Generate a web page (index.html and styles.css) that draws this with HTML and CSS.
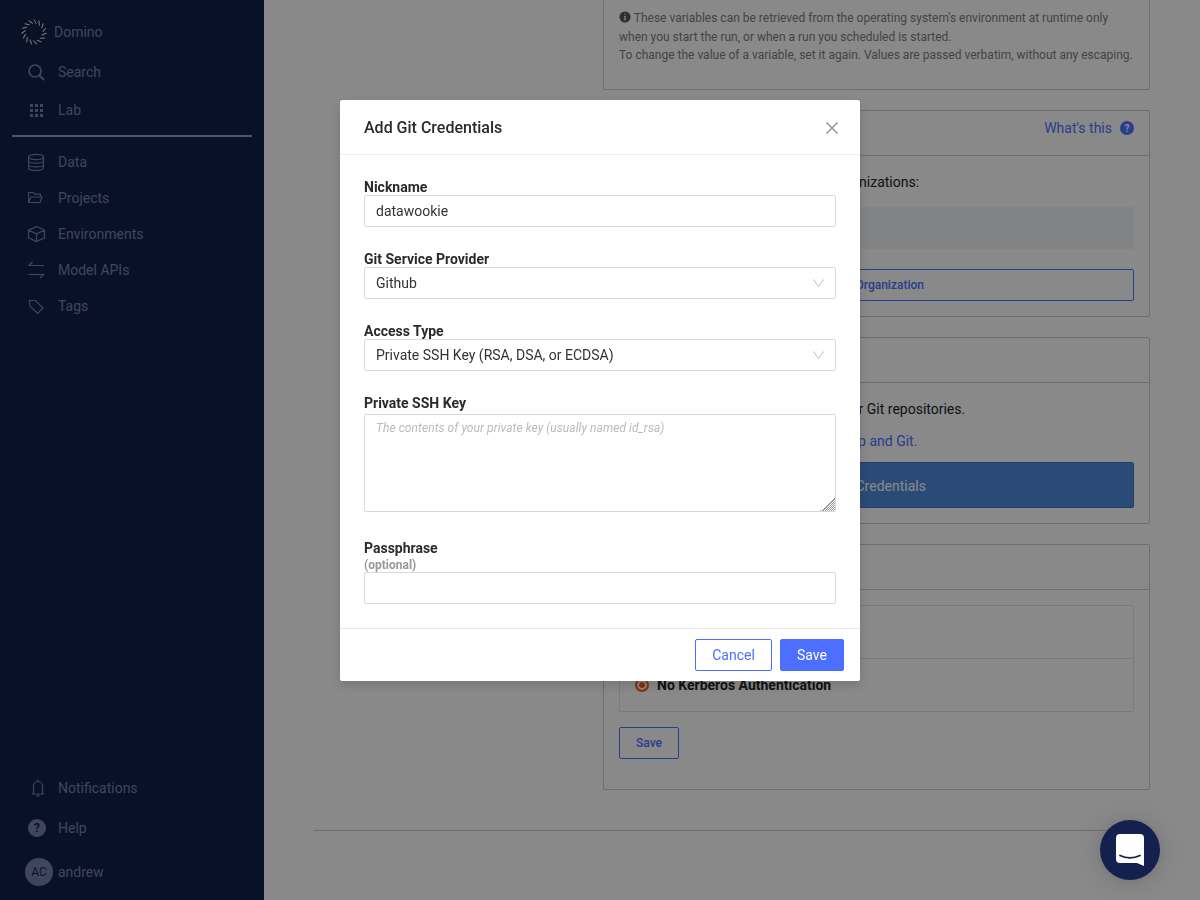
FILE: index.html
```html
<!DOCTYPE html>
<html lang="en">
<head>
    <meta charset="UTF-8">
    <title>Domino - Account Settings</title>
    <link rel="stylesheet" href="styles.css">
</head>
<body>
    <aside class="sidebar">
        <div class="logo-row">
            <svg class="logo" width="26" height="26" viewBox="0 0 26 26">
                <defs><path id="dash" d="M13 .8 L15.200 4.500" /></defs>
                <g stroke="#ece8d4" stroke-width="1" fill="none" stroke-linecap="round">
                    <use href="#dash" transform="rotate(0 13 13)"/>
                    <use href="#dash" transform="rotate(24 13 13)"/>
                    <use href="#dash" transform="rotate(48 13 13)"/>
                    <use href="#dash" transform="rotate(72 13 13)"/>
                    <use href="#dash" transform="rotate(96 13 13)"/>
                    <use href="#dash" transform="rotate(120 13 13)"/>
                    <use href="#dash" transform="rotate(144 13 13)"/>
                    <use href="#dash" transform="rotate(168 13 13)"/>
                    <use href="#dash" transform="rotate(192 13 13)"/>
                    <use href="#dash" transform="rotate(216 13 13)"/>
                    <use href="#dash" transform="rotate(240 13 13)"/>
                    <use href="#dash" transform="rotate(264 13 13)"/>
                    <use href="#dash" transform="rotate(288 13 13)"/>
                    <use href="#dash" transform="rotate(312 13 13)"/>
                    <use href="#dash" transform="rotate(336 13 13)"/>
                </g>
            </svg>
            <span>Domino</span>
        </div>
        <a class="nav-item tall">
            <svg class="nav-icon" width="18" height="18" viewBox="0 0 18 18"><circle cx="7" cy="8" r="6" stroke-width="1.700"/><path d="M11.300 12.300 L16 17" stroke-width="2"/></svg>
            Search
        </a>
        <a class="nav-item tall">
            <svg class="nav-icon" width="18" height="18" viewBox="0 0 18 18"><path class="solid" d="M2 3h3v3H2zM7 3h3v3H7zM12 3h3v3h-3zM2 8h3v3H2zM7 8h3v3H7zM12 8h3v3h-3zM2 13h3v3H2zM7 13h3v3H7zM12 13h3v3h-3z"/></svg>
            Lab
        </a>
        <div class="divider"></div>
        <a class="nav-item">
            <svg class="nav-icon" width="18" height="18" viewBox="0 0 18 18"><ellipse cx="8" cy="4" rx="7.500" ry="2.600"/><path d="M.5 4v11c0 1.400 3.400 2.500 7.500 2.500s7.500-1.100 7.500-2.500V4M.5 7.700c0 1.400 3.400 2.500 7.500 2.500s7.500-1.100 7.500-2.500M.5 11.400c0 1.400 3.400 2.500 7.500 2.500s7.500-1.100 7.500-2.500"/></svg>
            Data
        </a>
        <a class="nav-item">
            <svg class="nav-icon" width="18" height="18" viewBox="0 0 18 18"><path d="M.5 13.500V3.500h4.800l1.500 1.700h5.700v2.800M.5 13.500L3 8h11l-2 5.500z"/></svg>
            Projects
        </a>
        <a class="nav-item">
            <svg class="nav-icon" width="18" height="18" viewBox="0 0 18 18"><path d="M8.500 1.500l8 3.700v7.600l-8 3.700-8-3.700V5.200zM.5 5.200l8 3.700 8-3.700M8.500 8.900v7.600"/></svg>
            Environments
        </a>
        <a class="nav-item">
            <svg class="nav-icon" width="18" height="18" viewBox="0 0 18 18"><path d="M16 4.500H1L4.500 1M.5 13.500h15L12 17"/></svg>
            Model APIs
        </a>
        <a class="nav-item">
            <svg class="nav-icon" width="18" height="18" viewBox="0 0 18 18"><path d="M1.500 3.500h5.700l7.800 7.500-5.300 5.500L2 9.200zM4.800 6.500h.1"/></svg>
            Tags
        </a>
        <div class="sidebar-bottom">
            <a class="nav-item bottom">
                <svg class="nav-icon" width="18" height="18" viewBox="0 0 18 18"><path d="M4 15h12M5.500 15V7a4.500 4.500 0 0 1 9 0v8M10 .8v1.700M8.500 16.800h3"/></svg>
                Notifications
            </a>
            <a class="nav-item bottom">
                <svg class="nav-icon" width="18" height="18" viewBox="0 0 18 18"><circle class="solid" cx="9" cy="9" r="9"/><text class="help-mark" x="9" y="13">?</text></svg>
                Help
            </a>
            <a class="nav-item user">
                <span class="avatar">AC</span>
                andrew
            </a>
        </div>
    </aside>

    <main class="main">
        <div class="settings">
            <section class="card note">
                <svg class="info" width="12" height="12" viewBox="0 0 12 12"><circle cx="6" cy="6" r="5.500" fill="#555"/><path d="M5.200 2.500h1.500v1.300H5.200zM4.800 5h2v3.400h.6v.9H4.700v-.9h.6V5.900h-.5z" fill="#ddd"/></svg>
                These variables can be retrieved from the operating system's environment at runtime only<br>
                when you start the run, or when a run you scheduled is started.<br>
                To change the value of a variable, set it again. Values are passed verbatim, without any escaping.
            </section>

            <section class="card">
                <header class="card-header">
                    <span>Git Organizations</span>
                    <a class="whats-this">What's this <span class="help-dot">?</span></a>
                </header>
                <div class="card-body org-body">
                    <p>You now have access to these Git organizations:</p>
                    <div class="empty-box"></div>
                    <button class="btn-outline wide">Add Organization</button>
                </div>
            </section>

            <section class="card">
                <header class="card-header"><span>Git Credentials</span></header>
                <div class="card-body git-body">
                    <p>Enter credentials to access data in your Git repositories.</p>
                    <p class="link-line"><a>Learn more about Domino GitHub setup and Git.</a></p>
                    <button class="btn-solid">Add Credentials</button>
                </div>
            </section>

            <section class="card">
                <header class="card-header"><span>Kerberos</span></header>
                <div class="card-body kerberos-body">
                    <div class="radio-list">
                        <div class="radio-row"><span class="radio"></span>User Kerberos Authentication</div>
                        <div class="radio-row"><span class="radio checked"></span>No Kerberos Authentication</div>
                    </div>
                    <button class="btn-outline small">Save</button>
                </div>
            </section>
        </div>
        <hr class="page-end">
    </main>

    <div class="overlay"></div>

    <div class="modal">
        <header class="modal-header">
            <h3>Add Git Credentials</h3>
            <svg class="close" width="14" height="14" viewBox="0 0 14 14"><path d="M1.500 1.500l11 11M12.500 1.500l-11 11"/></svg>
        </header>
        <form class="modal-body">
            <div class="field">
                <label for="nickname">Nickname</label>
                <input id="nickname" type="text" value="datawookie">
            </div>
            <div class="field">
                <label>Git Service Provider</label>
                <div class="select">Github
                    <svg width="11" height="8" viewBox="0 0 11 8"><path d="M.5.500L5.500 7.500 10.500.500"/></svg>
                </div>
            </div>
            <div class="field">
                <label>Access Type</label>
                <div class="select">Private SSH Key (RSA, DSA, or ECDSA)
                    <svg width="11" height="8" viewBox="0 0 11 8"><path d="M.5.500L5.500 7.500 10.500.500"/></svg>
                </div>
            </div>
            <div class="field field-area">
                <label for="sshKey">Private SSH Key</label>
                <textarea id="sshKey" placeholder="The contents of your private key (usually named id_rsa)"></textarea>
            </div>
            <div class="field field-last">
                <label for="passphrase">Passphrase</label>
                <span class="optional">(optional)</span>
                <input id="passphrase" type="text">
            </div>
        </form>
        <footer class="modal-footer">
            <button class="btn-cancel">Cancel</button>
            <button class="btn-save">Save</button>
        </footer>
    </div>

    <div class="chat-bubble">
        <svg width="28" height="32" viewBox="0 0 28 32"><path d="M4 0h20a4 4 0 0 1 4 4v28l-7-3H4a4 4 0 0 1-4-4V4a4 4 0 0 1 4-4z" fill="#fff"/><path d="M4 21.500c6 3 14 3 20 0" fill="none" stroke="#14214f" stroke-width="1.800" stroke-linecap="round"/></svg>
    </div>
</body>
</html>
```

FILE: styles.css
```css
* {
    box-sizing: border-box;
}

html, body {
    height: 100%;
}

body {
    margin: 0;
    height: 900px;
    overflow: hidden;
    display: flex;
    font-family: Roboto, "Liberation Sans", sans-serif;
    font-size: 14px;
    color: #222;
    background-color: #fafafa;
}

/* sidebar */
.sidebar {
    width: 264px;
    flex-shrink: 0;
    display: flex;
    flex-direction: column;
    padding: 14px 12px 12px;
    background-color: #121f49;
    color: #737fae;
}

.logo-row {
    height: 36px;
    margin-bottom: 3px;
    padding-left: 9px;
    display: flex;
    align-items: center;
    gap: 7px;
}

.nav-item {
    height: 36px;
    padding-left: 16px;
    display: flex;
    align-items: center;
    gap: 12px;
}

.nav-item.tall {
    height: 38px;
}

.nav-item.bottom {
    height: 40px;
}

.nav-icon {
    fill: none;
    stroke: #737fae;
    stroke-width: 1.200;
    flex-shrink: 0;
}

.nav-icon .solid {
    fill: #737fae;
    stroke: none;
}

.help-mark {
    fill: #121f49;
    stroke: none;
    font-size: 12px;
    font-weight: 700;
    text-anchor: middle;
}

.divider {
    height: 2px;
    margin: 6px 0 7px;
    background-color: #8c9bcc;
}

.sidebar-bottom {
    margin-top: auto;
}

.nav-item.user {
    height: 32px;
    margin-top: 8px;
    padding-left: 13px;
    gap: 5px;
}

.avatar {
    width: 28px;
    height: 28px;
    border-radius: 50%;
    display: flex;
    align-items: center;
    justify-content: center;
    font-size: 12px;
    color: #121f49;
    background-color: #737fae;
}

/* page behind the dialog */
.main {
    flex: 1;
    padding: 0 50px;
}

.settings {
    margin-left: 289px;
    display: flex;
    flex-direction: column;
    gap: 20px;
}

.card {
    border: 1px solid #c8c8c8;
    border-radius: 2px;
}

.note {
    border-top: 0;
    padding: 9px 15px 24.500px;
    font-size: 12px;
    line-height: 18.500px;
    color: #7a7a7a;
}

.info {
    vertical-align: -1px;
}

.card-header {
    height: 45px;
    padding: 0 15px;
    display: flex;
    align-items: center;
    justify-content: space-between;
    border-bottom: 1px solid #c8c8c8;
}

.whats-this {
    margin-bottom: 10px;
    display: flex;
    align-items: center;
    gap: 8px;
    color: #4c6fff;
}

.help-dot {
    width: 14px;
    height: 14px;
    border-radius: 50%;
    display: flex;
    align-items: center;
    justify-content: center;
    font-size: 10px;
    font-weight: 700;
    color: #fafafa;
    background-color: #4c6fff;
}

.card-body {
    padding: 16px 15px 15px;
}

.card-body p {
    margin: 0;
    line-height: 20px;
}

.empty-box {
    height: 42px;
    margin: 15px 0 20px;
    background-color: #eceef1;
}

.btn-outline {
    height: 32px;
    display: block;
    font-family: inherit;
    font-size: 12px;
    font-weight: 500;
    color: #4c6fff;
    background: none;
    border: 1px solid #4c6fff;
    border-radius: 2px;
}

.btn-outline.wide {
    width: 100%;
    padding-left: 8px;
}

.btn-outline.small {
    width: 60px;
    margin-top: 15px;
}

.link-line {
    margin-top: 12px !important;
    color: #4c6fff;
}

.btn-solid {
    width: 100%;
    height: 46px;
    margin-top: 11px;
    padding-top: 3px;
    display: block;
    font-family: inherit;
    font-size: 14px;
    color: #fafafa;
    background-color: #4e87da;
    border: 1px solid #3d74c6;
    border-radius: 2px;
}

.kerberos-body {
    padding: 15px 15px 30px;
}

.radio-list {
    border: 1px solid #dedede;
    border-radius: 2px;
}

.radio-row {
    height: 52px;
    padding-left: 15px;
    display: flex;
    align-items: center;
    gap: 8px;
    font-weight: 700;
}

.radio-row + .radio-row {
    height: 53px;
    border-top: 1px solid #dedede;
}

.radio {
    width: 14px;
    height: 14px;
    border: 2px solid #e8601d;
    border-radius: 50%;
    background-color: #fafafa;
}

.radio.checked {
    background-color: #e8601d;
    box-shadow: inset 0 0 0 2px #fafafa;
}

.page-end {
    height: 1px;
    margin: 40px 0 0;
    border: 0;
    background-color: #c8c8c8;
}

/* dialog */
.overlay {
    position: fixed;
    inset: 0;
    background-color: rgba(0, 0, 0, 0.45);
}

.modal {
    position: fixed;
    top: 100px;
    left: 340px;
    width: 520px;
    background-color: #fff;
    border-radius: 2px;
    box-shadow: 0 4px 12px rgba(0, 0, 0, 0.15);
}

.modal-header {
    height: 55px;
    padding: 0 21px 0 24px;
    display: flex;
    align-items: center;
    justify-content: space-between;
    border-bottom: 1px solid #eee;
}

.modal-header h3 {
    margin: 0;
    font-size: 16px;
    font-weight: 500;
    color: #2a2a2a;
}

.close {
    margin-top: 2px;
    fill: none;
    stroke: #888;
    stroke-width: 1.200;
}

.modal-body {
    padding: 24px 24px 24px;
}

.field {
    margin-bottom: 24px;
}

.field label {
    display: block;
    height: 16px;
    line-height: 16px;
    font-weight: 700;
    color: #2a2a2a;
}

.field input, .select, .field textarea {
    width: 100%;
    display: block;
    font-family: inherit;
    font-size: 14px;
    color: #333;
    background-color: #fff;
    border: 1px solid #d9d9d9;
    border-radius: 2px;
}

.field input, .select {
    height: 32px;
    padding: 0 11px;
}

.select {
    display: flex;
    align-items: center;
    justify-content: space-between;
}

.select svg {
    fill: none;
    stroke: #bbb;
    stroke-width: 1;
}

.field-area {
    margin-bottom: 28px;
}

.field-area textarea {
    height: 98px;
    margin-top: 3px;
    padding: 6px 11px;
    outline: none;
}

.field-area textarea::placeholder {
    font-size: 12px;
    font-style: italic;
    letter-spacing: 0.06px;
    color: #bbb;
}

.field-area textarea::-webkit-resizer {
    background:
        linear-gradient(135deg, #fff 50%, transparent 50%),
        repeating-linear-gradient(135deg, #999 0 .8px, #fff .8px 1.500px);
}

.field-last {
    margin-bottom: 0;
}

.optional {
    display: block;
    height: 16px;
    line-height: 18px;
    font-size: 12px;
    font-weight: 700;
    color: #999;
}

.modal-footer {
    padding: 10px 16px;
    display: flex;
    justify-content: flex-end;
    gap: 8px;
    border-top: 1px solid #e8e8e8;
}

.btn-cancel, .btn-save {
    height: 32px;
    font-family: inherit;
    font-size: 14px;
    border: 1px solid #4c6fff;
    border-radius: 2px;
}

.btn-cancel {
    width: 77px;
    color: #4c6fff;
    background-color: #fff;
}

.btn-save {
    width: 64px;
    color: #fff;
    background-color: #4c6fff;
}

.chat-bubble {
    position: fixed;
    left: 1100px;
    top: 820px;
    width: 60px;
    height: 60px;
    border-radius: 50%;
    display: flex;
    align-items: center;
    justify-content: center;
    background-color: #14214f;
    box-shadow: 0 1px 6px rgba(0, 0, 0, 0.1), 0 2px 32px rgba(0, 0, 0, 0.16);
}
```
